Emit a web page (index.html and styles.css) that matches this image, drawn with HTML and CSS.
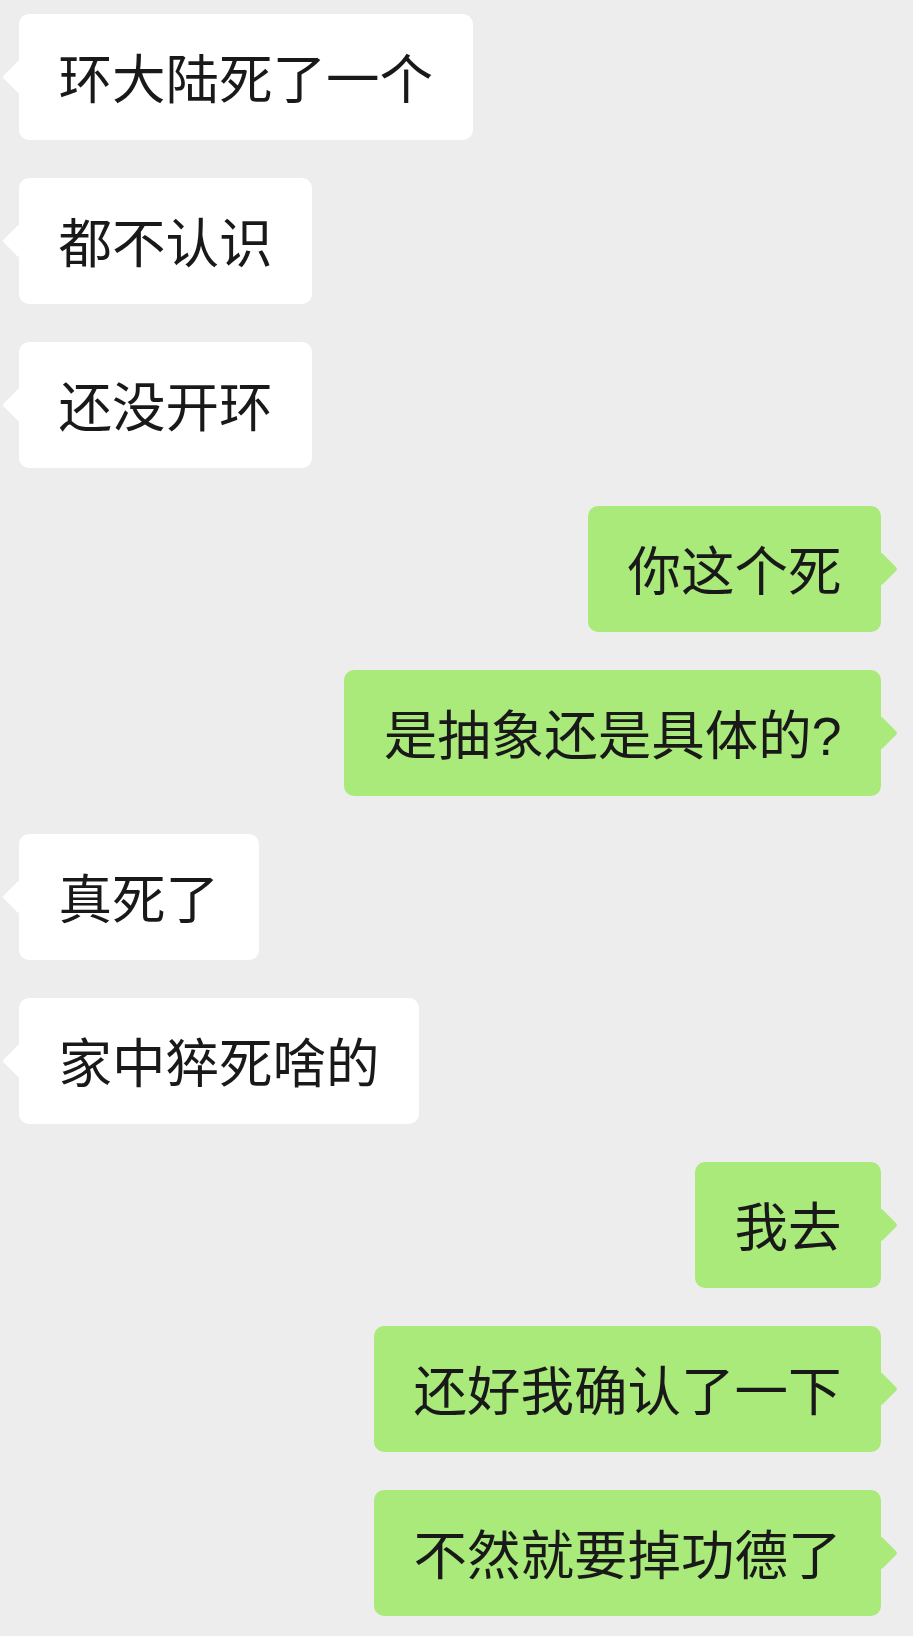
FILE: index.html
```html
<!DOCTYPE html>
<html lang="zh-CN">

<head>
  <meta charset="UTF-8">
  <meta name="viewport" content="width=device-width, initial-scale=1.0">
  <title>聊天</title>

  <link rel="stylesheet" href="styles.css">
</head>

<body>
  <!-- Chat messages -->
  <div class="chat">
    <div class="bubble left">环大陆死了一个</div>
    <div class="bubble left">都不认识</div>
    <div class="bubble left">还没开环</div>
    <div class="bubble right">你这个死</div>
    <div class="bubble right">是抽象还是具体的?</div>
    <div class="bubble left">真死了</div>
    <div class="bubble left">家中猝死啥的</div>
    <div class="bubble right">我去</div>
    <div class="bubble right">还好我确认了一下</div>
    <div class="bubble right">不然就要掉功德了</div>
  </div>
</body>

</html>
```

FILE: styles.css
```css
body {
  margin: 0;
  background-color: #ededed;
  font-family: "Liberation Sans", "Noto Sans CJK SC", sans-serif;
  color: #191919;
}

.chat {
  display: flex;
  flex-direction: column;
  gap: 38px;
  padding: 14px 32px 20px 19px;
}

.bubble {
  position: relative;
  padding: 34px 39.5px 26px;
  font-size: 53.5px;
  line-height: 66px;
  border-radius: 10px;
  white-space: nowrap;
}

/* little tail on the side of the bubble */
.bubble::after {
  content: "";
  position: absolute;
  top: 51px;
  width: 24px;
  height: 24px;
  border-radius: 3px;
  transform: rotate(45deg);
}

.left {
  align-self: flex-start;
  background-color: #ffffff;
}

.left::after {
  left: -12px;
  background-color: #ffffff;
}

.right {
  align-self: flex-end;
  background-color: #a9ea7a;
}

.right::after {
  right: -12px;
  background-color: #a9ea7a;
}
```
